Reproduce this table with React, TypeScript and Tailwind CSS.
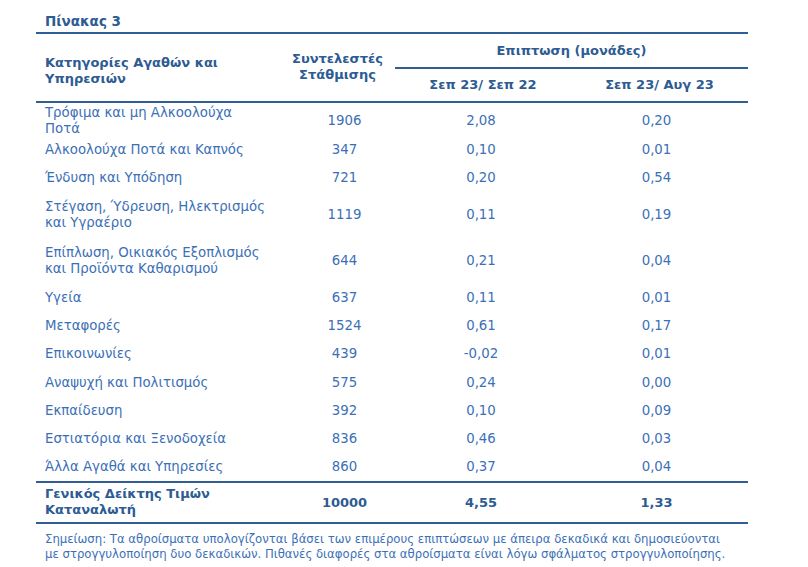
import React from 'react';

type Row = {
  name: string[];
  weight: string;
  yoy: string;
  mom: string;
  pad: string;
};

const rows: Row[] = [
  { name: ['Τρόφιμα και μη Αλκοολούχα', 'Ποτά'], weight: '1906', yoy: '2,08', mom: '0,20', pad: 'pt-[2px] pb-[3px]' },
  { name: ['Αλκοολούχα Ποτά και Καπνός'], weight: '347', yoy: '0,10', mom: '0,01', pad: 'pt-[2px] pb-[5px]' },
  { name: ['Ένδυση και Υπόδηση'], weight: '721', yoy: '0,20', mom: '0,54', pad: 'pt-[7px] pb-[7px]' },
  { name: ['Στέγαση, Ύδρευση, Ηλεκτρισμός', 'και Υγραέριο'], weight: '1119', yoy: '0,11', mom: '0,19', pad: 'pt-[6px] pb-[6px]' },
  { name: ['Επίπλωση, Οικιακός Εξοπλισμός', 'και Προϊόντα Καθαρισμού'], weight: '644', yoy: '0,21', mom: '0,04', pad: 'pt-[8px] pb-[7px]' },
  { name: ['Υγεία'], weight: '637', yoy: '0,11', mom: '0,01', pad: 'pt-[6px] pb-[6px]' },
  { name: ['Μεταφορές'], weight: '1524', yoy: '0,61', mom: '0,17', pad: 'pt-[6px] pb-[6px]' },
  { name: ['Επικοινωνίες'], weight: '439', yoy: '-0,02', mom: '0,01', pad: 'pt-[6px] pb-[6px]' },
  { name: ['Αναψυχή και Πολιτισμός'], weight: '575', yoy: '0,24', mom: '0,00', pad: 'pt-[7px] pb-[6px]' },
  { name: ['Εκπαίδευση'], weight: '392', yoy: '0,10', mom: '0,09', pad: 'pt-[6px] pb-[6px]' },
  { name: ['Εστιατόρια και Ξενοδοχεία'], weight: '836', yoy: '0,46', mom: '0,03', pad: 'pt-[6px] pb-[6px]' },
  { name: ['Άλλα Αγαθά και Υπηρεσίες'], weight: '860', yoy: '0,37', mom: '0,04', pad: 'pt-[6px] pb-[6px]' },
];

const App: React.FC = () => {
  return (
    <div className="w-[808px] h-[567px] bg-white pl-[36px] pt-[12px] font-['DejaVu_Sans',sans-serif] text-[#3b70b7]">
      <div className="w-[712px]">
        <h1 className="pl-[9px] text-[13.5px] leading-[18px] font-bold text-[#2d5b93] pb-[2px] border-b-2 border-[#2e5e95]">
          Πίνακας 3
        </h1>

        <table className="w-full border-collapse text-[13.3px] leading-[16px]">
          <colgroup>
            <col className="w-[244px]" />
            <col className="w-[115px]" />
            <col className="w-[176px]" />
            <col className="w-[177px]" />
          </colgroup>
          <thead className="text-[#2d5b93] font-bold text-[13px]">
            <tr className="h-[34px]">
              <th rowSpan={2} className="pl-[9px] pt-[6px] text-left align-middle font-bold border-b-2 border-[#2e5e95]">
                Κατηγορίες Αγαθών και
                <br />
                Υπηρεσιών
              </th>
              <th rowSpan={2} className="text-center align-middle font-bold border-b-2 border-[#2e5e95] pb-[2px]">
                Συντελεστές
                <br />
                Στάθμισης
              </th>
              <th colSpan={2} className="text-center align-middle font-bold border-b-2 border-[#2e5e95]">
                Επιπτωση (μονάδες)
              </th>
            </tr>
            <tr className="h-[34px]">
              <th className="text-center align-middle font-bold border-b-2 border-[#2e5e95]">Σεπ 23/ Σεπ 22</th>
              <th className="text-center align-middle font-bold border-b-2 border-[#2e5e95]">Σεπ 23/ Αυγ 23</th>
            </tr>
          </thead>
          <tbody>
            {rows.map((r, i) => (
              <tr key={i} className={i === rows.length - 1 ? 'border-b-2 border-[#2e5e95]' : ''}>
                <td className={`pl-[9px] text-left align-middle ${r.pad}`}>
                  {r.name.map((line, j) => (
                    <div key={j}>{line}</div>
                  ))}
                </td>
                <td className={`text-center align-middle pl-[14px] ${r.pad}`}>{r.weight}</td>
                <td className={`text-center align-middle pr-[4px] ${r.pad}`}>{r.yoy}</td>
                <td className={`text-center align-middle pr-[6px] ${r.pad}`}>{r.mom}</td>
              </tr>
            ))}
            <tr className="border-b-2 border-[#2e5e95] text-[#2d5b93] font-bold text-[13px]">
              <td className="pl-[9px] pt-[3px] pb-[4px] text-left align-middle">
                Γενικός Δείκτης Τιμών
                <br />
                Καταναλωτή
              </td>
              <td className="text-center align-middle pl-[14px]">10000</td>
              <td className="text-center align-middle pr-[4px]">4,55</td>
              <td className="text-center align-middle pr-[6px]">1,33</td>
            </tr>
          </tbody>
        </table>

        <p className="pl-[9px] pt-[7px] text-[13px] leading-[15px] font-['DejaVu_Sans_Condensed','Liberation_Sans_Narrow',sans-serif] text-[#3b70b7]">
          Σημείωση: Τα αθροίσματα υπολογίζονται βάσει των επιμέρους επιπτώσεων με άπειρα δεκαδικά και δημοσιεύονται
          <br />
          με στρογγυλοποίηση δυο δεκαδικών. Πιθανές διαφορές στα αθροίσματα είναι λόγω σφάλματος στρογγυλοποίησης.
        </p>
      </div>
    </div>
  );
};

export default App;
